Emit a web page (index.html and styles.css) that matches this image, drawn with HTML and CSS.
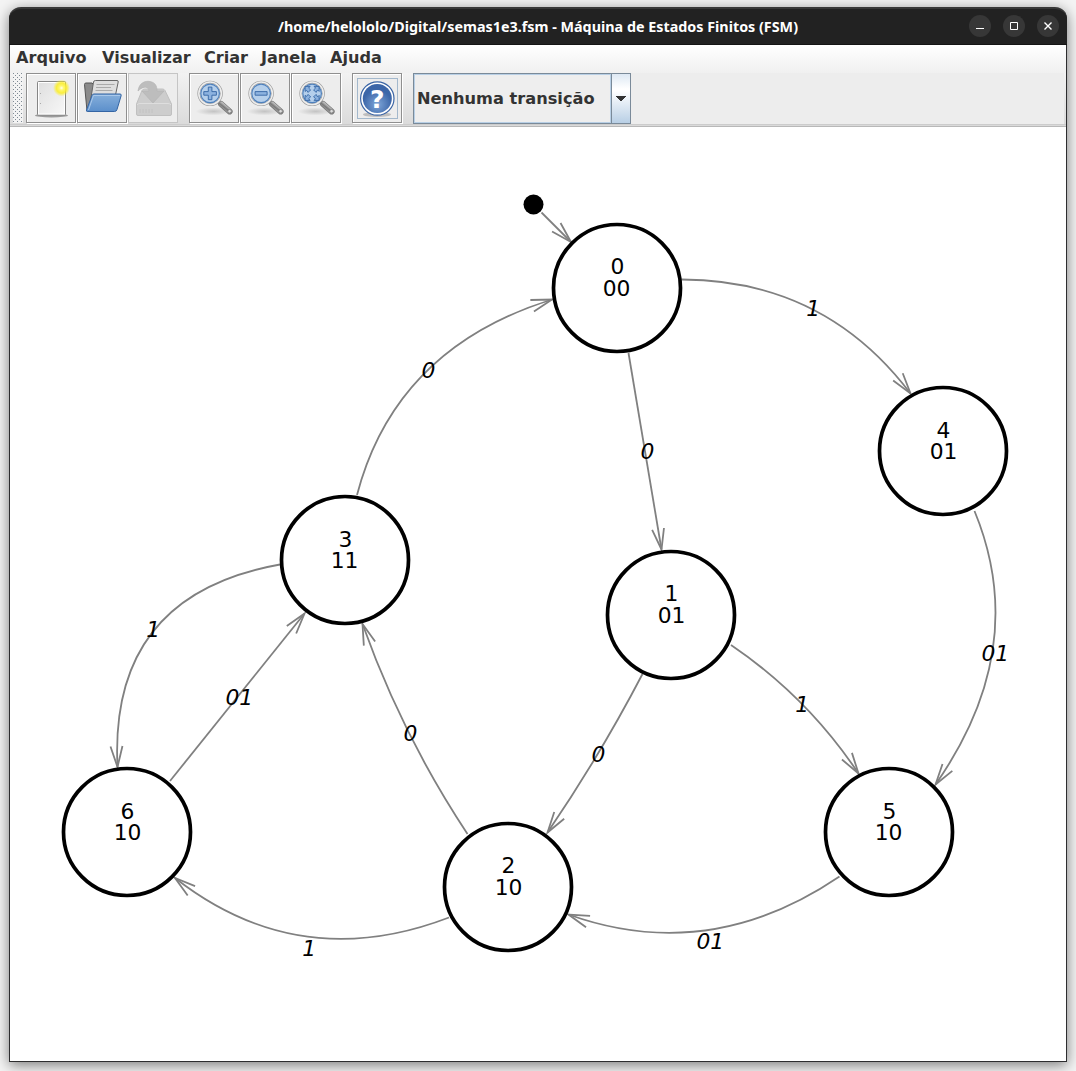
FILE: index.html
```html
<!DOCTYPE html>
<html lang="pt-BR">
<head>
<meta charset="utf-8">
<title>Máquina de Estados Finitos (FSM)</title>
<link rel="stylesheet" href="styles.css">
</head>
<body>
<div class="window">
  <header class="titlebar">
    <svg class="title" width="522" height="24" viewBox="0 0 522 24"><text x="1" y="17" textLength="520" lengthAdjust="spacingAndGlyphs">/home/helololo/Digital/semas1e3.fsm - Máquina de Estados Finitos (FSM)</text></svg>
    <div class="controls">
      <svg class="control" viewBox="0 0 22 22"><path d="M7 13.500h8"/></svg>
      <svg class="control" viewBox="0 0 22 22"><path d="M7.500 7.500h7v7h-7z"/></svg>
      <svg class="control" viewBox="0 0 22 22"><path d="M7.500 7.500l7 7M14.500 7.500l-7 7" stroke-width="1.400"/></svg>
    </div>
  </header>
  <div class="chrome">
    <nav class="menubar"><span>Arquivo</span><span>Visualizar</span><span>Criar</span><span>Janela</span><span>Ajuda</span></nav>
    <div class="toolbar">
      <div class="tools">
        <div class="grip"></div>
        <div class="group">
          <div class="button"><svg viewBox="0 0 50 50">
            <ellipse cx="25.500" cy="42.500" rx="16.500" ry="1.900" fill="#777" opacity=".7"/>
            <rect x="11.500" y="8.500" width="28" height="33.500" rx="1" fill="url(#paper)" stroke="#858585"/>
            <rect x="12.500" y="9.500" width="26" height="31.500" fill="none" stroke="#fff"/>
            <path d="M14 20.500h1M14 30.500h1" stroke="#aaa"/>
            <circle cx="35.500" cy="15" r="8.500" fill="url(#glow)"/>
          </svg></div>
          <div class="button"><svg viewBox="0 0 50 50">
            <path d="M10 38L7.500 11.500Q7.500 10 9 10h6l2 2h6v26z" fill="#8b8b8b" stroke="#555"/>
            <path d="M12.500 34L16.500 9q.3-1.500 2-1.500h21.500q1.500 0 1.200 1.500L36 34z" fill="#dedede" stroke="#666"/>
            <path d="M19.500 11.500h18M19 14.500h15M18.500 17.500h17" stroke="#aaa"/>
            <path d="M10.500 38.500q-1.500 0-1-1.500L15 22.500q.4-1.500 2-1.500h26q1.500 0 1.200 1.500L40 36.500q-.5 2-2.500 2z" fill="url(#folder)" stroke="#3465a4"/>
            <path d="M11.500 37L16.500 22.500H43" fill="none" stroke="#a9c8ea"/>
          </svg></div>
          <div class="button disabled"><svg viewBox="0 0 50 50">
            <path d="M8.500 31L14 17.500q.8-1.500 2.500-1.500h18q1.700 0 2.500 1.500L43.500 31v10q0 1.500-1.500 1.500H10q-1.500 0-1.500-1.500z" fill="#cdcdcd" stroke="#c0c0c0"/>
            <path d="M9 32q1-1.500 3-1.500h28q2 0 3 1.500" fill="none" stroke="#dedede"/>
            <path d="M12 36v4M15 36v4M18 36v4M21 36v4M24 36v4" stroke="#c2c2c2"/>
            <path d="M10 18C11 10 17 7.500 22 8.500c5 1 7 4 7 9.500h7L25 30 14 18h7c0-4-5-6-11 0z" fill="#bdbdbd" stroke="#b5b5b5" stroke-width=".7"/>
          </svg></div>
        </div>
        <div class="group">
          <div class="button"><svg viewBox="0 0 50 50"><g transform="translate(.6 .4)"><use href="#lens"/><path d="M18.700 13.700h3.600v4.500h4.500v3.600h-4.500v4.500h-3.600v-4.500h-4.500v-3.600h4.500z" class="glyph"/></g></svg></div>
          <div class="button"><svg viewBox="0 0 50 50"><g transform="translate(.6 .4)"><use href="#lens"/><path d="M14.500 18.200h12v3.600h-12z" class="glyph"/></g></svg></div>
          <div class="button"><svg viewBox="0 0 50 50"><g transform="translate(.6 .4)"><use href="#lens"/><path d="M13.500 18v-5h5l-1.500 1.700 2 1.800-2.500 2.500-1.500-2zM22.500 13h5v5L26 16.500 24.500 19 22 16.500l2-1.800zM13.500 22v5h5L17 25.300l2-1.800-2.500-2.500-1.500 2zM22.500 27h5v-5L26 23.500 24.500 21 22 23.500l2 1.800z" class="glyph"/></g></svg></div>
        </div>
        <div class="group">
          <div class="button focused"><svg viewBox="0 0 50 50">
            <ellipse cx="25" cy="41.500" rx="14" ry="2.500" fill="#777" opacity=".4"/>
            <circle cx="25.300" cy="25.500" r="16.700" fill="#fff" stroke="#3b65a5" stroke-width="1.200"/>
            <circle cx="25.300" cy="25.500" r="14.500" fill="url(#help)"/>
            <text x="25.300" y="34.500" class="question">?</text>
          </svg></div>
        </div>
      </div>
      <div class="combo"><span class="value">Nenhuma transição</span><span class="drop"><svg width="10" height="5" viewBox="0 0 10 5"><path d="M0 0h10v1H9v1H8v1H7v1H6v1H4V4H3V3H2V2H1V1H0z" fill="#333"/></svg></span></div>
      <div class="filler"></div>
    </div>
  </div>
  <svg class="canvas" viewBox="10 127 1056 934">
    <defs>
      <marker id="arrow" markerUnits="userSpaceOnUse" markerWidth="30" markerHeight="20" viewBox="-25 -10 30 20" refX="0" refY="0" orient="auto"><path d="M-20.800-6L0 0l-20.800 6" fill="none" stroke="#808080" stroke-width="1.800"/></marker>
      <linearGradient id="paper" x2="1" y2="1"><stop stop-color="#dedede"/><stop offset="1" stop-color="#f8f8f8"/></linearGradient>
      <radialGradient id="glow"><stop stop-color="#fffff0"/><stop offset=".25" stop-color="#fff870"/><stop offset=".6" stop-color="#fcee20" stop-opacity=".85"/><stop offset="1" stop-color="#fcee20" stop-opacity="0"/></radialGradient>
      <linearGradient id="folder" x2="0" y2="1"><stop stop-color="#86afdb"/><stop offset="1" stop-color="#5b8fcb"/></linearGradient>
      <radialGradient id="help" cy=".7"><stop stop-color="#7ea6d8"/><stop offset="1" stop-color="#3c66a8"/></radialGradient>
      <linearGradient id="metal" gradientUnits="userSpaceOnUse" x1="35" y1="30" x2="31" y2="35"><stop stop-color="#ddd"/><stop offset=".5" stop-color="#777"/><stop offset="1" stop-color="#b5b5b5"/></linearGradient>
      <radialGradient id="shade"><stop stop-color="#999" stop-opacity=".5"/><stop offset="1" stop-color="#999" stop-opacity="0"/></radialGradient>
      <g id="lens">
        <ellipse cx="24" cy="38" rx="18" ry="4" fill="url(#shade)"/>
        <path d="M28 27l4 4" stroke="#999" stroke-width="3"/>
        <path d="M31.500 30.500l8.500 7.500" stroke="#777" stroke-width="6" stroke-linecap="round"/>
        <path d="M31.500 30.500l8.500 7.500" stroke="url(#metal)" stroke-width="4.500" stroke-linecap="round"/>
        <circle cx="40" cy="37.800" r="1.800" fill="#ddd" stroke="#777" stroke-width=".7"/>
        <circle cx="20.500" cy="20" r="11.300" fill="#f5f5f5" stroke="#9b9b9b" stroke-width="2.800"/>
        <circle cx="20.500" cy="20" r="11.300" fill="none" stroke="#eee" stroke-width="1.500"/>
        <circle cx="20.500" cy="20" r="9.300" fill="#b5cfeb" stroke="#4f81bd" stroke-width="1.200"/>
      </g>
    </defs>
    <g class="edges">
      <path d="M541.500 212.500L571 242"/>
      <path d="M682 279.500Q824.600 280 910.500 393.500"/>
      <path d="M628.500 353L661.500 549.500"/>
      <path d="M357 495Q395.500 348.500 552 299.500"/>
      <path d="M974.500 511Q1031 648 935.500 784.500"/>
      <path d="M731 645Q807.200 696.700 858.500 773.500"/>
      <path d="M642.500 674Q600 755.500 547.500 832.500"/>
      <path d="M839.500 876.500Q709 965 568.500 914.500"/>
      <path d="M449 917.500Q299 975 175 878"/>
      <path d="M467.500 834Q402.200 735.400 362.500 624"/>
      <path d="M280 564.500Q109 595 117.500 767"/>
      <path d="M170 781L304.500 613.500"/>
    </g>
    <circle cx="533.500" cy="204.500" r="10"/>
    <g class="nodes">
      <circle cx="617" cy="288" r="63.500"/><circle cx="943" cy="451" r="63.500"/><circle cx="671" cy="615" r="63.500"/><circle cx="345" cy="560" r="63.500"/><circle cx="127" cy="832" r="63.500"/><circle cx="508" cy="887" r="63.500"/><circle cx="889" cy="832" r="63.500"/>
    </g>
    <g class="labels">
      <text x="617.500" y="274">0</text><text x="616.500" y="296">00</text>
      <text x="943.500" y="438">4</text><text x="943.500" y="459">01</text>
      <text x="671.500" y="601">1</text><text x="671.500" y="623">01</text>
      <text x="345.500" y="547">3</text><text x="344.500" y="568">11</text>
      <text x="127.500" y="819">6</text><text x="127.500" y="840">10</text>
      <text x="508.500" y="873">2</text><text x="508.500" y="895">10</text>
      <text x="889.500" y="819">5</text><text x="888.500" y="840">10</text>
    </g>
    <g class="labels conditions">
      <text x="813.300" y="316">1</text><text x="647.500" y="459">0</text><text x="428.500" y="378">0</text><text x="995.300" y="661">01</text><text x="802.300" y="712">1</text><text x="598.500" y="762">0</text><text x="710.300" y="949">01</text><text x="309.300" y="956">1</text><text x="410.500" y="741">0</text><text x="153.300" y="637">1</text><text x="239.300" y="705">01</text>
    </g>
  </svg>
</div>
</body>
</html>
```
FILE: styles.css
```css
* { box-sizing: border-box; }
body {
  margin: 0;
  height: 1071px;
  padding: 7px 9px 9px;
  overflow: hidden;
  background: #f4f4f4;
  font: bold 16.2px "DejaVu Sans", sans-serif;
  color: #333;
}
.window {
  display: flex;
  flex-direction: column;
  width: 1058px;
  height: 1055px;
  border: 1px solid #2d2d2f;
  border-top: 0;
  border-radius: 12px 12px 0 0;
  background: #fff;
  box-shadow: 0 3px 14px rgba(0, 0, 0, .5);
}
.titlebar {
  display: grid;
  grid-template-columns: 1fr 522px 1fr;
  align-items: center;
  height: 38px;
  margin: 0 -1px;
  background: #222;
  border-top: 2px solid #383838;
  border-bottom: 1px solid #151515;
  border-radius: 12px 12px 0 0;
}
.title {
  grid-column: 2;
  font: bold 14px "Noto Sans", sans-serif;
  fill: #fff;
}
.controls {
  display: flex;
  justify-content: flex-end;
  gap: 12px;
  padding: 0 8px 2px 0;
}
.control {
  width: 22px;
  height: 22px;
  border-radius: 50%;
  background: #373737;
  fill: none;
  stroke: #fff;
}
.chrome {
  height: 82px;
  background: linear-gradient(#fff, #dadada);
  border-bottom: 1px solid #b8b8b8;
}
.menubar {
  display: grid;
  grid-template-columns: 86px 102px 57px 69px auto;
  height: 28px;
  padding-left: 6px;
  font-size: 16.1px;
  line-height: 26px;
  background: linear-gradient(#fff, #f0f0f0);
}
.toolbar {
  display: flex;
  height: 52px;
  border-bottom: 1px solid #ccc;
}
.tools {
  display: flex;
  width: 403px;
  padding-left: 3px;
}
.grip {
  width: 10px;
  height: 50px;
  margin-right: 3px;
  background-color: #f3f3f3;
  background-image: linear-gradient(#7f8a94, #7f8a94), linear-gradient(#7f8a94, #7f8a94);
  background-image: conic-gradient(from 270deg at 1px 1px, #7f8a94 90deg, transparent 0), conic-gradient(from 270deg at 1px 1px, #7f8a94 90deg, transparent 0);
  background-size: 4px 4px;
  background-position: 0 0, 2px 2px;
}
.group {
  display: flex;
  gap: 1px;
  margin-right: 11px;
}
.button {
  position: relative;
  width: 50px;
  height: 50px;
  border: 1px solid #8f8f8f;
  background: #ededed;
  box-shadow: inset 1px 1px #fff, 1px 1px #fff;
}
.button svg {
  display: block;
  width: 50px;
  height: 50px;
  margin: -1px;
}
.disabled { border-color: #c5c5c5; box-shadow: none; }
.focused::after {
  content: "";
  position: absolute;
  inset: 4px 3px 3px 4px;
  border: 1px solid #a3b8cc;
}
.glyph {
  fill: #8cb2df;
  stroke: #3465a4;
  stroke-width: .9;
}
.question {
  font: bold 25px "DejaVu Sans", sans-serif;
  text-anchor: middle;
  fill: #fff;
}
.combo {
  display: flex;
  width: 218px;
  height: 51px;
  border: 1px solid #7a8a99;
  background: #eee;
}
.value {
  flex: 1;
  padding-left: 2px;
  line-height: 48px;
  border: 1px solid #b8cfe5;
}
.drop {
  display: grid;
  place-items: center;
  width: 19px;
  border-left: 1px solid #7a8a99;
  background: linear-gradient(#dde8f3, #fff 30%, #fff 35%, #b8cfe5);
}
.filler {
  flex: 1;
  margin-right: 2px;
  background: #ededed;
}
.canvas {
  display: block;
  width: 1056px;
  height: 934px;
}
.edges {
  fill: none;
  stroke: #808080;
  stroke-width: 1.8;
}
.edges path { marker-end: url(#arrow); }
.nodes {
  fill: #fff;
  stroke: #000;
  stroke-width: 3.7;
}
.labels {
  font: 21.8px "DejaVu Sans", sans-serif;
  text-anchor: middle;
  fill: #000;
}
.conditions { font-style: oblique; }
```
